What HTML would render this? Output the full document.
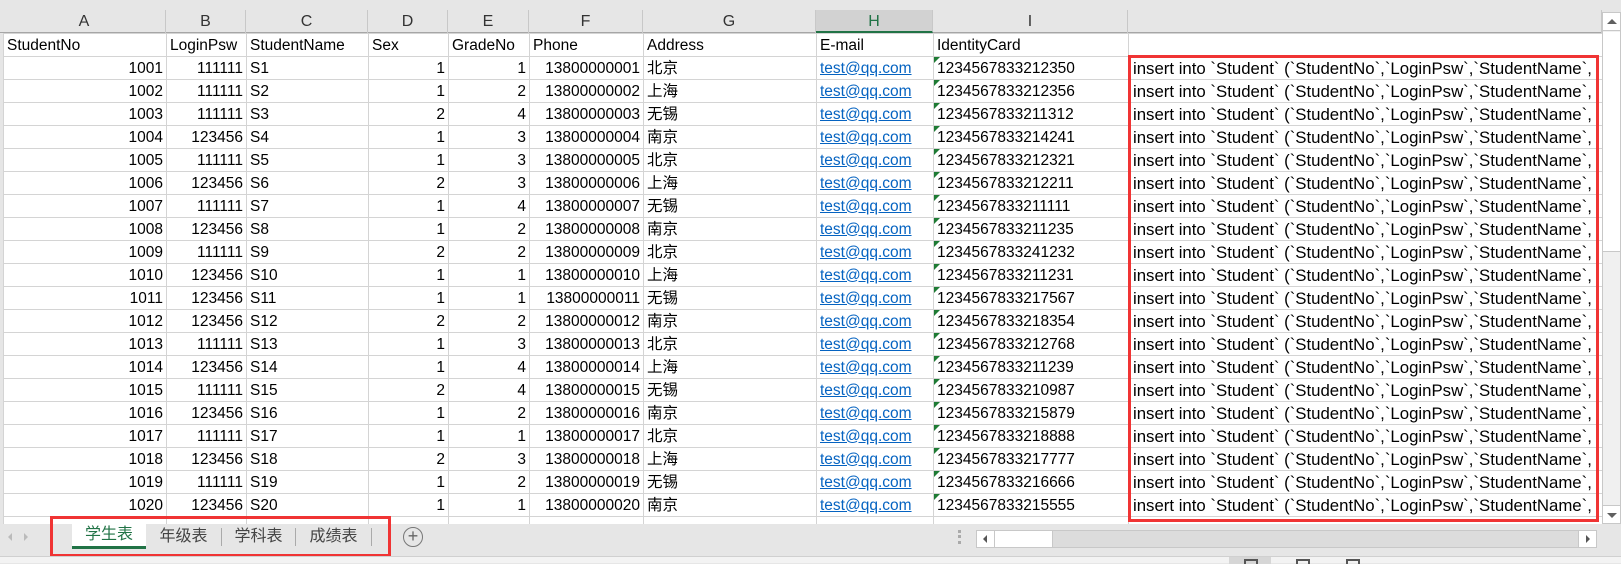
<!DOCTYPE html>
<html><head><meta charset="utf-8"><style>
*{margin:0;padding:0;box-sizing:border-box}
body{width:1621px;height:563px;overflow:hidden;background:#e6e6e6;font-family:"Liberation Sans","Noto Sans CJK SC",sans-serif;position:relative}
#hdr{position:absolute;left:0;top:10px;height:23px;width:1602px;background:#e6e6e6;border-bottom:1px solid #a6a6a6}
#hdr div{position:absolute;top:0;height:23px;line-height:23px;text-align:center;font-size:16px;color:#333;border-right:1px solid #c8c8c8}
#grid{position:absolute;left:3px;top:33px;border-collapse:collapse;table-layout:fixed;background:#fff;border-left:1px solid #9a9a9a}
#grid td{height:23px;border:1px solid #d4d4d4;font-size:15.5px;color:#000;padding:0 3px;white-space:nowrap;overflow:hidden;line-height:21px}
#grid td:nth-child(10){font-size:16.8px;padding-left:4px}
#grid td.r{text-align:right}
#grid td.l a{color:#0563c1;text-decoration:underline}
#grid td.c{position:relative}
#grid td.c:before{content:"";position:absolute;left:0;top:0;border-top:6px solid #1e7b34;border-right:6px solid transparent}
#vs{position:absolute;left:1602px;top:12px;width:19px;height:512px;background:#f0f0f0;border:1px solid #c8c8c8}
#red{position:absolute;left:1128px;top:55px;width:471px;height:467px;border:3px solid #f03434}
#tabs{position:absolute;left:0;top:524px;width:1621px;height:32px;background:#e6e6e6}
#status{position:absolute;left:0;top:556px;width:1621px;height:7px;background:#f3f3f3;border-top:1px solid #d0d0d0}
.tab{position:absolute;top:0;height:26px;line-height:24px;font-size:16px;color:#444;text-align:center}
</style></head><body>
<div id="hdr">
<div style="left:3px;width:163px">A</div><div style="left:166px;width:80px">B</div><div style="left:246px;width:122px">C</div><div style="left:368px;width:80px">D</div><div style="left:448px;width:81px">E</div><div style="left:529px;width:114px">F</div><div style="left:643px;width:173px">G</div><div style="left:816px;width:117px;background:#d2d2d2;color:#217346;border-bottom:2px solid #217346">H</div><div style="left:933px;width:195px">I</div><div style="left:1128px;width:474px"></div>
</div>
<table id="grid">
<colgroup><col style="width:163px"><col style="width:80px"><col style="width:122px"><col style="width:80px"><col style="width:81px"><col style="width:114px"><col style="width:173px"><col style="width:117px"><col style="width:195px"><col style="width:474px"></colgroup>
<tr><td>StudentNo</td><td>LoginPsw</td><td>StudentName</td><td>Sex</td><td>GradeNo</td><td>Phone</td><td>Address</td><td>E-mail</td><td>IdentityCard</td><td></td></tr>
<tr><td class="r">1001</td><td class="r">111111</td><td>S1</td><td class="r">1</td><td class="r">1</td><td class="r">13800000001</td><td>北京</td><td class="l"><a>test@qq.com</a></td><td class="c">1234567833212350</td><td>insert into `Student` (`StudentNo`,`LoginPsw`,`StudentName`,</td></tr>
<tr><td class="r">1002</td><td class="r">111111</td><td>S2</td><td class="r">1</td><td class="r">2</td><td class="r">13800000002</td><td>上海</td><td class="l"><a>test@qq.com</a></td><td class="c">1234567833212356</td><td>insert into `Student` (`StudentNo`,`LoginPsw`,`StudentName`,</td></tr>
<tr><td class="r">1003</td><td class="r">111111</td><td>S3</td><td class="r">2</td><td class="r">4</td><td class="r">13800000003</td><td>无锡</td><td class="l"><a>test@qq.com</a></td><td class="c">1234567833211312</td><td>insert into `Student` (`StudentNo`,`LoginPsw`,`StudentName`,</td></tr>
<tr><td class="r">1004</td><td class="r">123456</td><td>S4</td><td class="r">1</td><td class="r">3</td><td class="r">13800000004</td><td>南京</td><td class="l"><a>test@qq.com</a></td><td class="c">1234567833214241</td><td>insert into `Student` (`StudentNo`,`LoginPsw`,`StudentName`,</td></tr>
<tr><td class="r">1005</td><td class="r">111111</td><td>S5</td><td class="r">1</td><td class="r">3</td><td class="r">13800000005</td><td>北京</td><td class="l"><a>test@qq.com</a></td><td class="c">1234567833212321</td><td>insert into `Student` (`StudentNo`,`LoginPsw`,`StudentName`,</td></tr>
<tr><td class="r">1006</td><td class="r">123456</td><td>S6</td><td class="r">2</td><td class="r">3</td><td class="r">13800000006</td><td>上海</td><td class="l"><a>test@qq.com</a></td><td class="c">1234567833212211</td><td>insert into `Student` (`StudentNo`,`LoginPsw`,`StudentName`,</td></tr>
<tr><td class="r">1007</td><td class="r">111111</td><td>S7</td><td class="r">1</td><td class="r">4</td><td class="r">13800000007</td><td>无锡</td><td class="l"><a>test@qq.com</a></td><td class="c">1234567833211111</td><td>insert into `Student` (`StudentNo`,`LoginPsw`,`StudentName`,</td></tr>
<tr><td class="r">1008</td><td class="r">123456</td><td>S8</td><td class="r">1</td><td class="r">2</td><td class="r">13800000008</td><td>南京</td><td class="l"><a>test@qq.com</a></td><td class="c">1234567833211235</td><td>insert into `Student` (`StudentNo`,`LoginPsw`,`StudentName`,</td></tr>
<tr><td class="r">1009</td><td class="r">111111</td><td>S9</td><td class="r">2</td><td class="r">2</td><td class="r">13800000009</td><td>北京</td><td class="l"><a>test@qq.com</a></td><td class="c">1234567833241232</td><td>insert into `Student` (`StudentNo`,`LoginPsw`,`StudentName`,</td></tr>
<tr><td class="r">1010</td><td class="r">123456</td><td>S10</td><td class="r">1</td><td class="r">1</td><td class="r">13800000010</td><td>上海</td><td class="l"><a>test@qq.com</a></td><td class="c">1234567833211231</td><td>insert into `Student` (`StudentNo`,`LoginPsw`,`StudentName`,</td></tr>
<tr><td class="r">1011</td><td class="r">123456</td><td>S11</td><td class="r">1</td><td class="r">1</td><td class="r">13800000011</td><td>无锡</td><td class="l"><a>test@qq.com</a></td><td class="c">1234567833217567</td><td>insert into `Student` (`StudentNo`,`LoginPsw`,`StudentName`,</td></tr>
<tr><td class="r">1012</td><td class="r">123456</td><td>S12</td><td class="r">2</td><td class="r">2</td><td class="r">13800000012</td><td>南京</td><td class="l"><a>test@qq.com</a></td><td class="c">1234567833218354</td><td>insert into `Student` (`StudentNo`,`LoginPsw`,`StudentName`,</td></tr>
<tr><td class="r">1013</td><td class="r">111111</td><td>S13</td><td class="r">1</td><td class="r">3</td><td class="r">13800000013</td><td>北京</td><td class="l"><a>test@qq.com</a></td><td class="c">1234567833212768</td><td>insert into `Student` (`StudentNo`,`LoginPsw`,`StudentName`,</td></tr>
<tr><td class="r">1014</td><td class="r">123456</td><td>S14</td><td class="r">1</td><td class="r">4</td><td class="r">13800000014</td><td>上海</td><td class="l"><a>test@qq.com</a></td><td class="c">1234567833211239</td><td>insert into `Student` (`StudentNo`,`LoginPsw`,`StudentName`,</td></tr>
<tr><td class="r">1015</td><td class="r">111111</td><td>S15</td><td class="r">2</td><td class="r">4</td><td class="r">13800000015</td><td>无锡</td><td class="l"><a>test@qq.com</a></td><td class="c">1234567833210987</td><td>insert into `Student` (`StudentNo`,`LoginPsw`,`StudentName`,</td></tr>
<tr><td class="r">1016</td><td class="r">123456</td><td>S16</td><td class="r">1</td><td class="r">2</td><td class="r">13800000016</td><td>南京</td><td class="l"><a>test@qq.com</a></td><td class="c">1234567833215879</td><td>insert into `Student` (`StudentNo`,`LoginPsw`,`StudentName`,</td></tr>
<tr><td class="r">1017</td><td class="r">111111</td><td>S17</td><td class="r">1</td><td class="r">1</td><td class="r">13800000017</td><td>北京</td><td class="l"><a>test@qq.com</a></td><td class="c">1234567833218888</td><td>insert into `Student` (`StudentNo`,`LoginPsw`,`StudentName`,</td></tr>
<tr><td class="r">1018</td><td class="r">123456</td><td>S18</td><td class="r">2</td><td class="r">3</td><td class="r">13800000018</td><td>上海</td><td class="l"><a>test@qq.com</a></td><td class="c">1234567833217777</td><td>insert into `Student` (`StudentNo`,`LoginPsw`,`StudentName`,</td></tr>
<tr><td class="r">1019</td><td class="r">111111</td><td>S19</td><td class="r">1</td><td class="r">2</td><td class="r">13800000019</td><td>无锡</td><td class="l"><a>test@qq.com</a></td><td class="c">1234567833216666</td><td>insert into `Student` (`StudentNo`,`LoginPsw`,`StudentName`,</td></tr>
<tr><td class="r">1020</td><td class="r">123456</td><td>S20</td><td class="r">1</td><td class="r">1</td><td class="r">13800000020</td><td>南京</td><td class="l"><a>test@qq.com</a></td><td class="c">1234567833215555</td><td>insert into `Student` (`StudentNo`,`LoginPsw`,`StudentName`,</td></tr>
<tr><td></td><td></td><td></td><td></td><td></td><td></td><td></td><td></td><td></td><td></td></tr>
</table>
<div id="red"></div>
<div id="vs">
<div style="position:absolute;left:0;top:0;width:17px;height:18px;border-bottom:1px solid #c8c8c8;background:#fff"><div style="margin:6px auto 0;width:0;border-left:5px solid transparent;border-right:5px solid transparent;border-bottom:5px solid #606060"></div></div>
<div style="position:absolute;left:0;top:19px;width:17px;height:220px;background:#fff;border-bottom:1px solid #c8c8c8"></div>
<div style="position:absolute;left:0;bottom:0;width:17px;height:18px;border-top:1px solid #c8c8c8;background:#fff"><div style="margin:7px auto 0;width:0;border-left:5px solid transparent;border-right:5px solid transparent;border-top:5px solid #606060"></div></div>
</div>
<div id="tabs">
<div style="position:absolute;left:8px;top:9px;width:0;border-top:4px solid transparent;border-bottom:4px solid transparent;border-right:4px solid #bbb"></div>
<div style="position:absolute;left:24px;top:9px;width:0;border-top:4px solid transparent;border-bottom:4px solid transparent;border-left:4px solid #bbb"></div>
<div class="tab" style="left:72px;width:74px;background:#fff;color:#217346;border-bottom:3px solid #217346;top:-1px">学生表</div>
<div class="tab" style="left:146px;width:76px;border-right:1px solid #aaa;height:18px;top:4px;line-height:18px">年级表</div>
<div class="tab" style="left:222px;width:74px;border-right:1px solid #aaa;height:18px;top:4px;line-height:18px">学科表</div>
<div class="tab" style="left:296px;width:76px;border-right:1px solid #aaa;height:18px;top:4px;line-height:18px">成绩表</div>
<div style="position:absolute;left:50px;top:-8px;width:341px;height:41px;border:3px solid #f03434"></div>
<div style="position:absolute;left:403px;top:3px;width:20px;height:20px;border:1.5px solid #777;border-radius:50%;text-align:center;line-height:16px;font-size:18px;color:#666">+</div>
<div style="position:absolute;left:958px;top:6px;width:3px;height:14px;border-left:3px dotted #aaa"></div>
<div style="position:absolute;left:976px;top:6px;width:621px;height:18px;background:#dcdcdc;border:1px solid #c8c8c8">
<div style="position:absolute;left:0;top:0;width:18px;height:16px;background:#fff;border-right:1px solid #c8c8c8"><div style="margin:4px 0 0 6px;width:0;border-top:4px solid transparent;border-bottom:4px solid transparent;border-right:4px solid #555"></div></div>
<div style="position:absolute;left:18px;top:0;width:58px;height:16px;background:#fff;border-right:1px solid #c8c8c8"></div>
<div style="position:absolute;right:0;top:0;width:18px;height:16px;background:#fff;border-left:1px solid #c8c8c8"><div style="margin:4px 0 0 7px;width:0;border-top:4px solid transparent;border-bottom:4px solid transparent;border-left:4px solid #555"></div></div>
</div>
</div>
<div id="status">
<div style="position:absolute;left:1229px;top:0;width:42px;height:7px;background:#d6d6d6"></div>
<div style="position:absolute;left:1244px;top:2px;width:14px;height:5px;border:2px solid #555;border-bottom:none"></div>
<div style="position:absolute;left:1296px;top:2px;width:14px;height:5px;border:2px solid #555;border-bottom:none"></div>
<div style="position:absolute;left:1346px;top:2px;width:14px;height:5px;border:2px solid #555;border-bottom:none"></div>
</div>
</body></html>
